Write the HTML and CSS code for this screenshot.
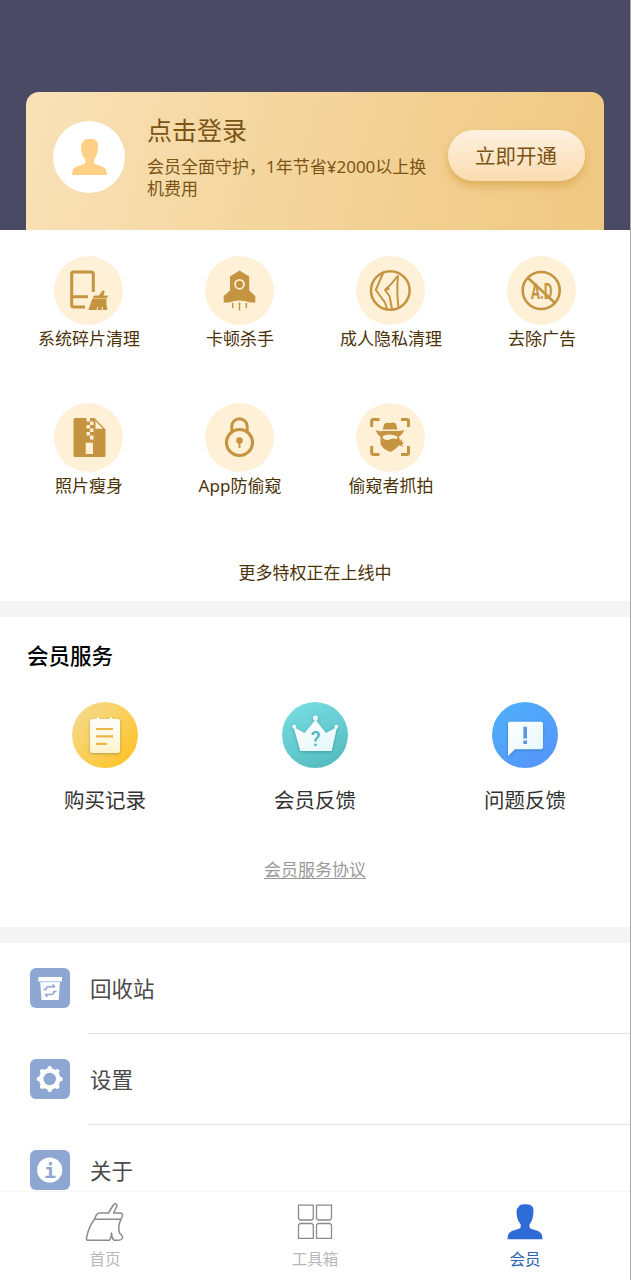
FILE: index.html
```html
<!DOCTYPE html>
<html lang="zh-CN">
<head>
    <title>会员</title>
    <meta charset="utf-8">
    <link rel="stylesheet" href="styles.css">
</head>

<body>
<div class="page">
    <div class="header">
        <div class="vip_card">
            <div class="avatar">
                <svg width="35" height="36" viewBox="0 0 35 35" preserveAspectRatio="none"><path fill="#ffd086" d="M17 0Q25 -.5 26 5C26 12 25 16.500 22 20V23C23 26 33 25 34.500 31L35 35H0L.5 31C2 25 12 26 13.200 23V20C10 16.500 9 12 9 7Q9 4 11 3Q11.500 0 17 0Z"/></svg>
            </div>
            <div class="vip_text">
                <div class="login">点击登录</div>
                <div class="slogan">会员全面守护，1年节省¥2000以上换机费用</div>
            </div>
            <button type="button" class="open_button">立即开通</button>
        </div>
    </div>

    <div class="features">
        <div class="feature">
            <svg class="feature_icon" viewBox="0 0 69 69">
                <path class="line" stroke-width="3" d="M31 51H19.500Q17.700 51 17.700 49V18Q17.700 16 19.500 16H37.500Q39.300 16 39.300 18V36M17.700 40.700H34"/>
                <path class="solid" d="M46 38L48.500 34.500Q50.500 33.500 50.600 36L49.500 39.500H53.500V42H39Q39 39.500 41 39.500H45ZM38.500 42.500H52.500V50Q54 52 53 54H34.300Q36 50 37 46Z"/>
                <path d="M43 54.200L43.600 51M48 54.200L48.500 51" stroke="#fff0d8" stroke-width="1"/>
            </svg>
            <div class="feature_name">系统碎片清理</div>
        </div>
        <div class="feature">
            <svg class="feature_icon" viewBox="0 0 69 69">
                <path class="solid" d="M34.500 14.500L44.200 20.500V34.500L50.300 40V46.500H45Q34.500 42.500 24 46.500H18.700V40L25 34.500V20.500Z"/>
                <circle cx="34.500" cy="28.300" r="4.500" fill="none" stroke="#fff0d8" stroke-width="1.800"/>
                <path class="line" stroke-width="1.500" d="M27.700 47V52M34.500 46.500V54.500M41.300 47V52"/>
            </svg>
            <div class="feature_name">卡顿杀手</div>
        </div>
        <div class="feature">
            <svg class="feature_icon" viewBox="0 0 69 69">
                <circle class="line" cx="34.300" cy="34.500" r="19.300" stroke-width="2.500"/>
                <path class="line" stroke-width="2" stroke-linejoin="round" d="M27.500 16L19.800 34L29 46.500L31 53M42 19.500Q36 28 29 34L33.500 40L36 53M42 19.500Q40.500 36 42.500 51.500M29 34L33.500 32.500"/>
            </svg>
            <div class="feature_name">成人隐私清理</div>
        </div>
        <div class="feature">
            <svg class="feature_icon" viewBox="0 0 69 69">
                <text class="ad" x="24" y="43" textLength="21.500" lengthAdjust="spacingAndGlyphs">A.D</text>
                <circle class="line" cx="34.200" cy="34.500" r="18.500" stroke-width="2.600"/>
                <path class="line" stroke-width="2.600" d="M20.500 21.500L48 47"/>
            </svg>
            <div class="feature_name">去除广告</div>
        </div>
        <div class="feature">
            <svg class="feature_icon" viewBox="0 0 69 69">
                <path class="solid" d="M21 15H40.500L51.500 26.500V52.500Q51.500 54 50 54H21Q19.500 54 19.500 52.500V16.500Q19.500 15 21 15Z"/>
                <path fill="#fff0d8" d="M32.500 15H36V18.500H32.500ZM36 18.500H39.500V22H36ZM32.500 22H36V25.500H32.500ZM36 25.500H39.500V29H36ZM32.500 29H36V32.500H32.500ZM36 32.500H39.500V36.500H36ZM31.700 39.800H39V51H31.700ZM41.500 18L49 25.700H41.500Z"/>
            </svg>
            <div class="feature_name">照片瘦身</div>
        </div>
        <div class="feature">
            <svg class="feature_icon" viewBox="0 0 69 69">
                <circle class="line" cx="34.500" cy="39.500" r="13" stroke-width="3.200"/>
                <path class="line" stroke-width="3" d="M26.800 29.500V23.500A7.700 7.700 0 0 1 42.200 23.500V29.500"/>
                <circle class="solid" cx="34.500" cy="37.500" r="3.300"/>
                <path class="line" stroke-width="2" d="M34.500 38V45"/>
            </svg>
            <div class="feature_name">App防偷窥</div>
        </div>
        <div class="feature">
            <svg class="feature_icon" viewBox="0 0 69 69">
                <path class="line" stroke-width="3" d="M15.700 24V18Q15.700 16.500 17.500 16.500H23.500M45 16.500H51Q52.500 16.500 52.500 18V24M52.500 43V50Q52.500 51.500 51 51.500H45M23.500 51.500H17.500Q15.700 51.500 15.700 50V43"/>
                <path class="solid" d="M28.500 21Q30 19 34 20Q39 18.500 40 21L41.500 26.500H26.500ZM19.500 27Q23 28.500 26 28H42Q46 28 48.500 27Q46 32 43 33.500L44 38L46 36V39L48.500 40L46 41L47 44L43.500 42Q40 46 34.500 49Q27 46.500 24.500 41V34Q21 31.500 19.500 27Z"/>
                <path fill="#fff0d8" d="M27 33Q34 30 41.500 33.500L41 36Q36 34.500 32.500 37Q29 37.500 26.500 35Z"/>
            </svg>
            <div class="feature_name">偷窥者抓拍</div>
        </div>
    </div>
    <div class="more">更多特权正在上线中</div>

    <div class="services">
        <h2>会员服务</h2>
        <div class="service_list">
            <div class="service">
                <svg class="service_icon" viewBox="0 0 66 66">
                    <defs>
                        <linearGradient id="gold" x1="0" y1="0" x2="1" y2="1"><stop offset=".1" stop-color="#f5da8c"/><stop offset=".9" stop-color="#ffc328"/></linearGradient>
                        <linearGradient id="teal" x1="0" y1="0" x2=".5" y2="1"><stop offset="0" stop-color="#7bdfe7"/><stop offset="1" stop-color="#57bfc1"/></linearGradient>
                        <linearGradient id="blue" x1="0" y1="0" x2=".7" y2="1"><stop offset="0" stop-color="#4db1fa"/><stop offset="1" stop-color="#5596fb"/></linearGradient>
                        <linearGradient id="pale" x1="0" y1="0" x2="0" y2="1"><stop offset="0" stop-color="#fff"/><stop offset="1" stop-color="#fff3cf"/></linearGradient>
                        <linearGradient id="ice" x1="0" y1="0" x2="1" y2="1"><stop offset="0" stop-color="#fff"/><stop offset="1" stop-color="#e4f7fc"/></linearGradient>
                    </defs>
                    <circle cx="33" cy="33" r="33" fill="url(#gold)"/>
                    <path class="raised" fill="url(#pale)" d="M20.500 17H24.500Q24.500 15 26 15T27.500 17H37.500Q37.500 15 39 15T40.500 17H45.500Q48 17 48 19.500V48.500Q48 51 45.500 51H20.500Q18 51 18 48.500V19.500Q18 17 20.500 17Z"/>
                    <path stroke="#eeb64b" stroke-width="2.200" d="M24 27H41M24 34.300H41M24 41.800H35"/>
                </svg>
                <div class="service_name">购买记录</div>
            </div>
            <div class="service">
                <svg class="service_icon" viewBox="0 0 66 66">
                    <circle cx="33" cy="33" r="33" fill="url(#teal)"/>
                    <g class="raised" fill="url(#ice)">
                        <path d="M11.500 25L22.500 31L32.500 19V16H34.500V19L44 31L55 25L49.700 49H18.300Z"/>
                        <circle cx="12.300" cy="24.700" r="2"/>
                        <circle cx="33.500" cy="16" r="2.500"/>
                        <circle cx="54.300" cy="24.700" r="2"/>
                    </g>
                    <text class="question" x="33.500" y="44" text-anchor="middle">?</text>
                </svg>
                <div class="service_name">会员反馈</div>
            </div>
            <div class="service">
                <svg class="service_icon" viewBox="0 0 66 66">
                    <circle cx="33" cy="33" r="33" fill="url(#blue)"/>
                    <path class="raised" fill="url(#ice)" d="M18 19.700H49Q51 19.700 51 21.700V45.300Q51 47.300 49 47.300H23L16 54V21.700Q16 19.700 18 19.700Z"/>
                    <path fill="#5a96e8" d="M31.400 24.700H35V36.500H31.400ZM31.400 38.500H35V42H31.400Z"/>
                </svg>
                <div class="service_name">问题反馈</div>
            </div>
        </div>
        <a class="agreement">会员服务协议</a>
    </div>

    <div class="menu">
        <div class="menu_item">
            <svg class="menu_icon" viewBox="0 0 40 40">
                <path fill="#fff" d="M8.300 9H32V13.500H30L28.700 32H11.500L10.200 13.500H8.300Z"/>
                <path fill="none" stroke="#8ea6d2" stroke-width="1.500" d="M13.500 21.500H16Q16 18.800 19 18.800H25M22.500 16.500L25 18.800M26.500 23.500H24Q24 26.500 21 26.500H15M17.500 28.800L15 26.500"/>
                <path stroke="#8ea6d2" stroke-width=".7" d="M10 13.700H30"/>
            </svg>
            <div class="menu_name">回收站</div>
        </div>
        <div class="menu_item">
            <svg class="menu_icon" viewBox="0 0 40 40">
                <circle cx="19.700" cy="20" r="8.500" fill="none" stroke="#fff" stroke-width="4.500"/>
                <path stroke="#fff" stroke-width="4.500" stroke-linecap="round" d="M19.700 9.200V10M19.700 30V30.800M8.900 20H9.700M29.700 20H30.500M12.100 12.400L12.500 12.800M26.900 27.200L27.300 27.600M27.300 12.400L26.900 12.800M12.500 27.200L12.100 27.600"/>
            </svg>
            <div class="menu_name">设置</div>
        </div>
        <div class="menu_item">
            <svg class="menu_icon" viewBox="0 0 40 40">
                <circle cx="19.700" cy="20" r="12.600" fill="#fff"/>
                <text class="info" x="19.900" y="27.500" text-anchor="middle">i</text>
            </svg>
            <div class="menu_name">关于</div>
        </div>
    </div>

    <div class="tab_bar">
        <div class="tab">
            <svg width="40" height="40" viewBox="0 0 40 40">
                <path fill="none" stroke="#8b8b8b" stroke-width="1.500" stroke-linejoin="round" d="M9.500 17.300Q11.500 11 14.500 11H23.500L28 3.500C30 .5 33 2 31.500 5L28.500 11H35Q38 11 37.500 14L36 17.300Q32.500 24 34.500 31Q38 34 37.500 36Q36.500 38.300 34 38.300H29Q26.500 36 26.500 31Q26.500 35 24.500 38.300H2.500Q1.200 38 1.500 36Q3.500 25 9.500 17.300H36"/>
            </svg>
            <div>首页</div>
        </div>
        <div class="tab">
            <svg width="40" height="40" viewBox="0 0 40 40">
                <path fill="none" stroke="#8b8b8b" stroke-width="1.300" d="M3.500 3.200H18.300V16.500L16.800 18H5L3.500 16.500ZM21.500 3.200H36.500V16.500L35 18H23L21.500 16.500ZM5 21.500H16.800L18.300 23V36.400H3.500V23ZM23 21.500H35L36.500 23V36.400H21.500V23Z"/>
            </svg>
            <div>工具箱</div>
        </div>
        <div class="tab tab_active">
            <svg width="40" height="40" viewBox="-2.500 -2.300 40 40"><path fill="#2f6bd6" d="M17 0Q25 -.5 26 5C26 12 25 16.500 22 20V23C23 26 33 25 34.500 31L35 35H0L.5 31C2 25 12 26 13.200 23V20C10 16.500 9 12 9 7Q9 4 11 3Q11.500 0 17 0Z"/></svg>
            <div>会员</div>
        </div>
    </div>
</div>
</body>
</html>
```
FILE: styles.css
```css
body {
    margin: 0;
    background-color: #fff;
    font-family: "Noto Sans", "Noto Sans CJK SC", sans-serif;
    font-weight: 400;
}
.page {
    box-sizing: border-box;
    width: 631px;
    height: 1280px;
    overflow: hidden;
    display: flex;
    flex-direction: column;
    border-right: 1px solid #a6a6a6;
}
.header {
    box-sizing: border-box;
    flex: none;
    height: 230px;
    margin-right: -1px;
    padding: 92px 27px 0 26px;
    background-color: #4a4a64;
}
.vip_card {
    box-sizing: border-box;
    height: 138px;
    padding: 0 19px 0 27px;
    display: flex;
    align-items: flex-start;
    border-radius: 13px 13px 0 0;
    background: linear-gradient(105deg, #f9e2b8 0%, #f4d59d 45%, #efc881 100%);
    color: #7b5415;
}
.avatar {
    flex: none;
    width: 72px;
    height: 72px;
    margin-top: 29px;
    border-radius: 50%;
    background-color: #fff;
    display: flex;
    align-items: center;
    justify-content: center;
}
.vip_text {
    width: 284px;
    margin: 21px 0 0 22px;
}
.login {
    font-size: 25px;
    line-height: 34px;
}
.slogan {
    margin-top: 9px;
    font-size: 17px;
    line-height: 21.500px;
}
.open_button {
    flex: none;
    width: 137px;
    height: 51px;
    margin: 38px 0 0 auto;
    padding: 0 1px 1px 0;
    border: 0;
    border-radius: 26px;
    background: linear-gradient(#fdf1e0, #fbdcb1);
    box-shadow: 0 5px 9px #dfae5b;
    color: #7b5415;
    font: inherit;
    font-size: 20.500px;
}

/* privileges */
.features {
    flex: none;
    display: grid;
    grid-template-columns: repeat(4, 151px);
    grid-auto-rows: 147px;
    padding: 26px 0 1px 13px;
}
.feature {
    display: flex;
    flex-direction: column;
    align-items: center;
}
.feature_icon {
    width: 69px;
    height: 69px;
    border-radius: 50%;
    background-color: #fff0d8;
}
.line {
    fill: none;
    stroke: #c49440;
}
.solid {fill: #c49440;}
.ad {
    font: bold 22px Roboto, sans-serif;
    fill: #c49440;
}
.feature_name, .more {
    font-size: 17px;
    line-height: 26px;
    color: #4b3207;
}
.feature_name {
    margin-top: 1px;
    padding-left: 1px;
}
.more {
    flex: none;
    height: 41px;
    margin-top: 9px;
    text-align: center;
    border-bottom: 16px solid #f4f4f4;
}

/* services */
.services {
    box-sizing: border-box;
    flex: none;
    height: 326px;
    border-bottom: 16px solid #f4f4f4;
    text-align: center;
}
h2 {
    margin: 24px 0 0 27px;
    font-size: 21.500px;
    line-height: 30px;
    font-weight: 500;
    text-align: left;
    color: #000;
}
.service_list {
    display: flex;
    margin-top: 31px;
}
.service {flex: 1;}
.service_icon {
    display: block;
    width: 66px;
    height: 66px;
    margin: 0 auto 17px;
}
.service_name {
    font-size: 20.500px;
    line-height: 30px;
    color: #333;
}
.raised {filter: drop-shadow(0 1px 1.500px rgba(0, 60, 80, .3));}
.question {
    font: 500 20px Roboto, sans-serif;
    fill: #4fb8bd;
}
.agreement {
    display: block;
    margin-top: 42px;
    font-size: 17px;
    line-height: 26px;
    color: #999;
    text-decoration: underline;
    text-decoration-thickness: 1px;
    text-underline-offset: 2px;
}

/* menu */
.menu {
    height: 248px;
    flex: none;
    overflow: hidden;
}
.menu_item {
    height: 91px;
    display: flex;
    align-items: center;
    padding-left: 30px;
}
.menu_icon {
    width: 40px;
    height: 40px;
    margin-bottom: 2px;
    border-radius: 6px;
    background-color: #8ea6d2;
}
.menu_name {
    box-sizing: border-box;
    flex: 1;
    height: 91px;
    margin-left: 18px;
    padding-left: 2px;
    border-bottom: 1px solid #e2e2e2;
    font-size: 21.500px;
    line-height: 91px;
    color: #4a4a4a;
}
.info {
    font: bold 20px "DejaVu Sans Mono", monospace;
    fill: #8ea6d2;
}

.tab_bar {
    box-sizing: border-box;
    flex: none;
    height: 89px;
    padding-top: 10px;
    border-top: 1px solid #f6f6f6;
    display: flex;
}
.tab {
    flex: 1;
    text-align: center;
    font-size: 15.500px;
    line-height: 24px;
    color: #b8b8b8;
}
.tab svg {
    display: block;
    margin: 0 auto 5px;
}
.tab_active {color: #2f62b5;}
```
